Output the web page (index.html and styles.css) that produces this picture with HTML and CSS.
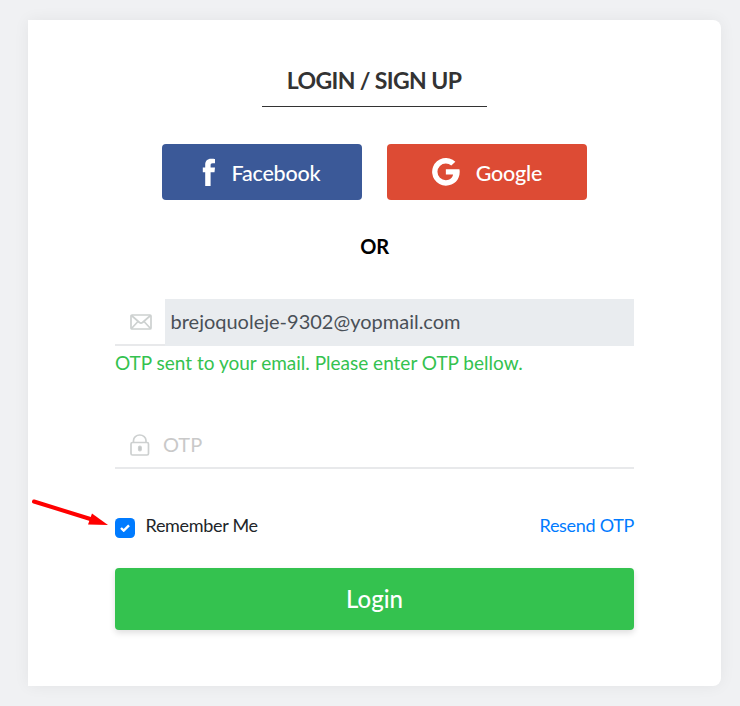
FILE: index.html
```html
<!DOCTYPE html>
<html lang="en">
<head>
<meta charset="utf-8">
<title>Login / Sign up</title>
<link rel="stylesheet" href="styles.css">
</head>
<body>
<main class="card">
  <h1 class="title">LOGIN / SIGN UP</h1>
  <div class="social">
    <button class="social-btn facebook" type="button">
      <svg width="14" height="28" viewBox="0 0 14 28"><path fill="#fff" d="M13 1v4.300h-2.200C8.900 5.300 8.600 6.100 8.600 7.400v2.200H13l-.5 4.600H8.600V28H3.200V14.200H.800V9.600h2.400V6.900C3.200 3 5.400.8 9 .8c1.700 0 3.500.1 4 .2Z"/></svg>
      <span>Facebook</span>
    </button>
    <button class="social-btn google" type="button">
      <svg width="28" height="28" viewBox="0.5 0.2 28.300 28.300"><path fill="#fff" d="M14.500 11.600h13.700c.2.900.3 1.700.3 2.600 0 8.200-5.600 14-14 14a14 14 0 1 1 9.600-24.300L20 7.900A8.600 8.600 0 0 0 14.500 5.700a8.500 8.500 0 1 0 0 17c4.200 0 6.700-2.300 7.300-5.700h-7.300Z"/></svg>
      <span>Google</span>
    </button>
  </div>
  <p class="or">OR</p>
  <form class="form">
    <div class="field email">
      <span class="icon mail"><svg width="22" height="16" viewBox="0 0 22 16" fill="none" stroke="#cdd1d0" stroke-width="1.700"><rect x="1" y="1" width="20" height="14" rx="1"/><path d="m1.500 1.500 8 7q1.500 1.200 3 0l8-7M1.500 14.500l6-6.500M20.500 14.500l-6-6.500"/></svg></span>
      <span class="email-value">brejoquoleje-9302@yopmail.com</span>
    </div>
    <p class="notice">OTP sent to your email. Please enter OTP bellow.</p>
    <div class="field otp">
      <span class="icon lock"><svg width="20" height="22" viewBox="0 0 20 22" fill="none" stroke="#cdd0d0" stroke-width="1.700"><rect x="1" y="8.500" width="17.500" height="12.500" rx="1.500"/><path d="M3.500 8V6.500a6.250 5.500 0 0 1 12.500 0V8"/><rect x="8.500" y="12" width="2.800" height="5" rx="1.400" fill="#c2c5c5" stroke-width="1.200"/></svg></span>
      <span class="placeholder">OTP</span>
    </div>
    <div class="options">
      <span class="remember"><span class="check"><svg width="10" height="8" viewBox="0 0 10 8"><path d="m1 4 2.700 2.600L9 1.300" fill="none" stroke="#fff" stroke-width="2.400"/></svg></span><span>Remember Me</span></span>
      <a class="resend">Resend OTP</a>
    </div>
    <button class="login" type="button">Login</button>
  </form>
  <svg class="arrow" width="76" height="32" viewBox="0 0 76 32"><path d="M2 3.500 60 21.500" stroke="#ff0000" stroke-width="4" stroke-linecap="round"/><path fill="#ff0000" d="m60 15.500 16 11.500-20-.5Z"/></svg>
</main>
</body>
</html>
```
FILE: styles.css
```css
* { box-sizing: border-box; }
body { margin: 0; padding: 20px 19px 20px 28px; height: 706px; background: #f0f1f3; font-family: Lato, sans-serif; color: #212529; }
.card { position: relative; height: 666px; padding: 45px 87px 0; background: #fff; border-radius: 0 8px 8px 0; box-shadow: 0 0 16px rgba(0,0,0,.06); }
.title { width: 225px; height: 42px; margin: 0 auto; padding-right: 1px; border-bottom: 1px solid #333; color: #333; font-size: 23px; line-height: 30px; font-weight: 700; letter-spacing: -.62px; text-align: center; white-space: nowrap; }
.social { display: flex; justify-content: center; gap: 25px; margin-top: 37px; }
.social-btn { display: flex; align-items: center; justify-content: center; gap: 16px; width: 200px; height: 56px; padding: 0; border: 0; border-radius: 4px; color: #fff; font: 500 21.500px Lato, sans-serif; letter-spacing: -.2px; }
.social-btn span { padding-top: 2px; }
.facebook { padding-right: 2px; background: #3b5998; }
.google { background: #dd4b34; }
.or { margin: 32px 0 0; font-size: 20px; line-height: 28px; font-weight: 700; letter-spacing: -.3px; text-align: center; color: #000; }
.form { margin-top: 39px; }
.field { display: flex; height: 47px; border-bottom: 2px solid #e8e9eb; }
.icon { display: flex; align-items: center; justify-content: center; width: 50px; flex: none; }
.mail { padding-left: 1px; }
.lock { padding-right: 1px; padding-top: 1px; }
.email-value { flex: 1; height: 47px; padding-left: 5.500px; background: #e9ecef; color: #495057; font-size: 20px; line-height: 44px; }
.notice { margin: 3px 0 0; font-size: 19px; line-height: 27px; color: #34c24f; white-space: nowrap; }
.otp { margin-top: 46px; }
.placeholder { color: #c9c9c9; font-size: 20px; line-height: 44px; margin-left: -2px; }
.options { display: flex; justify-content: space-between; height: 24px; margin-top: 44px; font-size: 18px; line-height: 24px; letter-spacing: -.3px; }
.remember { display: flex; gap: 10.500px; }
.check { display: flex; align-items: center; justify-content: center; width: 20px; height: 20px; margin-top: 5px; border-radius: 4.500px; background: #007bff; }
.resend { color: #007bff; }
.login { display: block; width: 100%; height: 62px; margin-top: 31px; padding: 0 0 2px; border: 0; border-radius: 4px; background: #34c24f; box-shadow: 0 3px 6px rgba(0,0,0,.13); color: #fff; font: 500 24px Lato, sans-serif; }
.arrow { position: absolute; left: 4px; top: 478px; }
```
